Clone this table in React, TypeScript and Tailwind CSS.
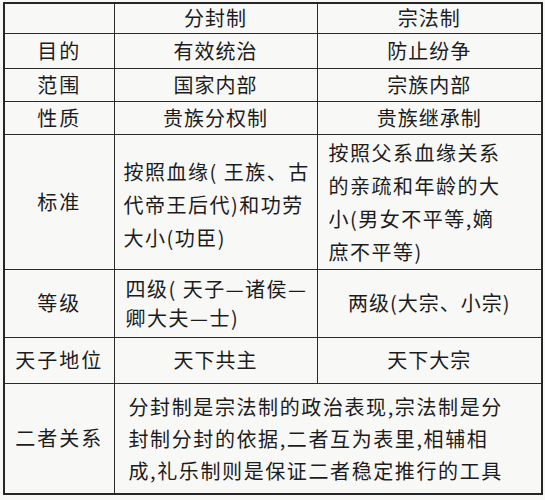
const font = { fontFamily: '"Noto Sans CJK SC", "Noto Sans", sans-serif' }

const simpleRows = [
  { label: '目的', a: '有效统治', b: '防止纷争', h: 'h-[35px]' },
  { label: '范围', a: '国家内部', b: '宗族内部', h: 'h-[33px]' },
  { label: '性质', a: '贵族分权制', b: '贵族继承制', h: 'h-[33px]' },
]

const line = 'border-[1.5px] border-[#2b2b2b]'

export default function App() {
  return (
    <div className="w-[545px] h-[500px] bg-[#f8f8f7] pt-[2px] pl-[3px] text-[#1c1c1c]" style={font}>
      <table className="table-fixed border-collapse w-[538px] border-2 border-[#262626] text-[20px]">
        <colgroup>
          <col className="w-[110px]" />
          <col className="w-[203px]" />
          <col className="w-[225px]" />
        </colgroup>
        <tbody>
          {/* Header */}
          <tr className="h-[30px]">
            <td className={line}></td>
            <td className={`${line} text-center tracking-[1px] leading-none`}>分封制</td>
            <td className={`${line} text-center tracking-[1px] leading-none`}>宗法制</td>
          </tr>

          {simpleRows.map(r => (
            <tr key={r.label} className={r.h}>
              <td className={`${line} text-center tracking-[2px] leading-none`}>{r.label}</td>
              <td className={`${line} text-center tracking-[1px] leading-none`}>{r.a}</td>
              <td className={`${line} text-center tracking-[1px] leading-none`}>{r.b}</td>
            </tr>
          ))}

          {/* 标准 */}
          <tr className="h-[135px]">
            <td className={`${line} text-center tracking-[2px]`}>标准</td>
            <td className={`${line} pl-[9px] pt-[5px] leading-[33px] tracking-[1.5px] whitespace-nowrap`}>
              按照血缘( 王族、古<br />
              代帝王后代)和功劳<br />
              大小(功臣)
            </td>
            <td className={`${line} pl-[11px] leading-[33px] tracking-[1.5px] whitespace-nowrap`}>
              按照父系血缘关系<br />
              的亲疏和年龄的大<br />
              小(男女不平等,嫡<br />
              庶不平等)
            </td>
          </tr>

          {/* 等级 */}
          <tr className="h-[68px]">
            <td className={`${line} text-center tracking-[2px]`}>等级</td>
            <td className={`${line} pl-[11px] leading-[29px] tracking-[1.5px] whitespace-nowrap`}>
              四级( 天子—诸侯—<br />
              卿大夫—士)
            </td>
            <td className={`${line} text-center tracking-[1px]`}>两级(大宗、小宗)</td>
          </tr>

          {/* 天子地位 */}
          <tr className="h-[46px]">
            <td className={`${line} text-center tracking-[2px]`}>天子地位</td>
            <td className={`${line} text-center tracking-[1px]`}>天下共主</td>
            <td className={`${line} text-center tracking-[1px]`}>天下大宗</td>
          </tr>

          {/* 二者关系 */}
          <tr className="h-[111px]">
            <td className={`${line} text-center tracking-[2px]`}>二者关系</td>
            <td colSpan={2} className={`${line} pl-[14px] pt-[2px] leading-[32px] tracking-[1.6px] whitespace-nowrap`}>
              分封制是宗法制的政治表现,宗法制是分<br />
              封制分封的依据,二者互为表里,相辅相<br />
              成,礼乐制则是保证二者稳定推行的工具
            </td>
          </tr>
        </tbody>
      </table>
    </div>
  )
}
